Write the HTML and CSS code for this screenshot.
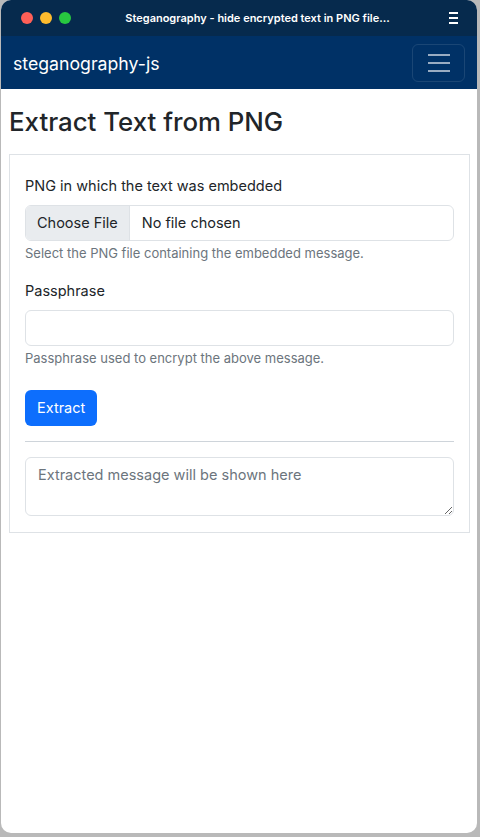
FILE: index.html
```html
<!DOCTYPE html>
<html lang="en">
  <head>
    <meta charset="UTF-8" />
    <meta name="viewport" content="width=device-width, initial-scale=1.0" />
    <title>Steganography - hide encrypted text in PNG files</title>
    <link rel="stylesheet" href="styles.css">
  </head>
  <body>
    <div class="window">
      <div class="titlebar">
        <div class="lights">
          <span class="light red"></span>
          <span class="light yellow"></span>
          <span class="light green"></span>
        </div>
        <div class="title">Steganography - hide encrypted text in PNG file...</div>
        <svg class="menu-icon" width="12" height="14" viewBox="0 0 12 14">
          <rect x="1" y="1" width="9" height="2" fill="#fff" />
          <rect x="1" y="6" width="9" height="2" fill="#fff" />
          <rect x="1" y="11" width="9" height="2" fill="#fff" />
        </svg>
      </div>

      <nav class="navbar">
        <a class="brand" href="#">steganography-js</a>
        <button class="toggler" type="button">
          <svg width="24" height="20" viewBox="0 0 24 20">
            <path d="M1 2h22M1 10h22M1 18h22" stroke="rgba(255,255,255,0.6)" stroke-width="2" />
          </svg>
        </button>
      </nav>

      <main class="content">
        <h1>Extract Text from PNG</h1>
        <form class="extract-box">
          <div class="field">
            <label>PNG in which the text was embedded</label>
            <div class="file-input">
              <span class="file-btn">Choose File</span>
              <span class="file-name">No file chosen</span>
            </div>
            <div class="help">Select the PNG file containing the embedded message.</div>
          </div>
          <div class="field">
            <label for="pass">Passphrase</label>
            <input id="pass" class="text-input" type="password" />
            <div class="help">Passphrase used to encrypt the above message.</div>
          </div>
          <button class="btn-extract" type="button">Extract</button>
          <hr />
          <textarea class="output" placeholder="Extracted message will be shown here"></textarea>
        </form>
      </main>
    </div>
  </body>
</html>
```

FILE: styles.css
```css
html, body {
  margin: 0;
  height: 100%;
}

body {
  background-color: #b9b9b9;
  font-family: Inter, "Liberation Sans", sans-serif;
  color: #212529;
}

.window {
  width: 476px;
  height: 833px;
  margin-left: 1px;
  background: white;
  border-radius: 10px;
  overflow: hidden;
  display: flex;
  flex-direction: column;
}

.titlebar {
  height: 36px;
  background-color: #062a4d;
  display: flex;
  align-items: center;
  padding: 0 14px 0 20px;
  color: white;
}

.lights {
  display: flex;
  gap: 7px;
}

.light {
  width: 12px;
  height: 12px;
  border-radius: 50%;
}

.red { background: #fe5f57; }
.yellow { background: #febc2e; }
.green { background: #28c840; }

.title {
  flex: 1;
  text-align: center;
  font-size: 11px;
  font-weight: 600;
  padding-right: 4px;
}

.menu-icon {
  margin-right: 3px;
}

.navbar {
  height: 53px;
  background-color: #003166;
  display: flex;
  align-items: center;
  justify-content: space-between;
  padding: 0 12px;
  box-sizing: border-box;
}

.brand {
  color: white;
  text-decoration: none;
  font-size: 17.7px;
  padding-top: 2px;
}

.toggler {
  width: 53px;
  height: 38px;
  background: transparent;
  border: 1px solid rgba(255, 255, 255, 0.1);
  border-radius: 6px;
  display: flex;
  align-items: center;
  justify-content: center;
  padding: 0;
}

.content {
  padding: 8px 7px 8px 8px;
}

.content h1 {
  margin: 10px 0 16px;
  font-size: 25.8px;
  font-weight: 500;
  line-height: 1.2;
}

.extract-box {
  border: 1px solid #dee2e6;
  padding: 16px 15px 16px 15px;
}

.field {
  margin-bottom: 21px;
}

.field label {
  display: block;
  font-size: 14.5px;
  line-height: 18px;
  margin: 6px 0 10px;
}

.file-input {
  display: flex;
  height: 36px;
  border: 1px solid #dee2e6;
  border-radius: 6px;
  overflow: hidden;
  box-sizing: border-box;
  font-size: 14.5px;
}

.file-btn {
  background: #e9ecef;
  border-right: 1px solid #dee2e6;
  padding: 0 11px;
  display: flex;
  align-items: center;
}

.file-name {
  padding: 0 12px;
  display: flex;
  align-items: center;
}

.text-input {
  display: block;
  width: 100%;
  height: 36px;
  box-sizing: border-box;
  border: 1px solid #dee2e6;
  border-radius: 6px;
}

.help {
  margin-top: 4px;
  font-size: 13px;
  line-height: 16px;
  color: #6c757d;
}

.btn-extract {
  display: block;
  margin-top: 24px;
  background-color: #0d6efd;
  color: white;
  border: none;
  border-radius: 6px;
  font-family: inherit;
  font-size: 14.5px;
  height: 36px;
  box-sizing: border-box;
  padding: 0 12px;
}

hr {
  border: 0;
  border-top: 1px solid #ced4da;
  margin: 15px 0;
}

.output {
  display: block;
  width: 100%;
  height: 59px;
  box-sizing: border-box;
  border: 1px solid #dee2e6;
  border-radius: 6px;
  padding: 8px 12px;
  font-family: inherit;
  font-size: 14.5px;
  resize: vertical;
}

.output::placeholder {
  color: #6c757d;
}
```
